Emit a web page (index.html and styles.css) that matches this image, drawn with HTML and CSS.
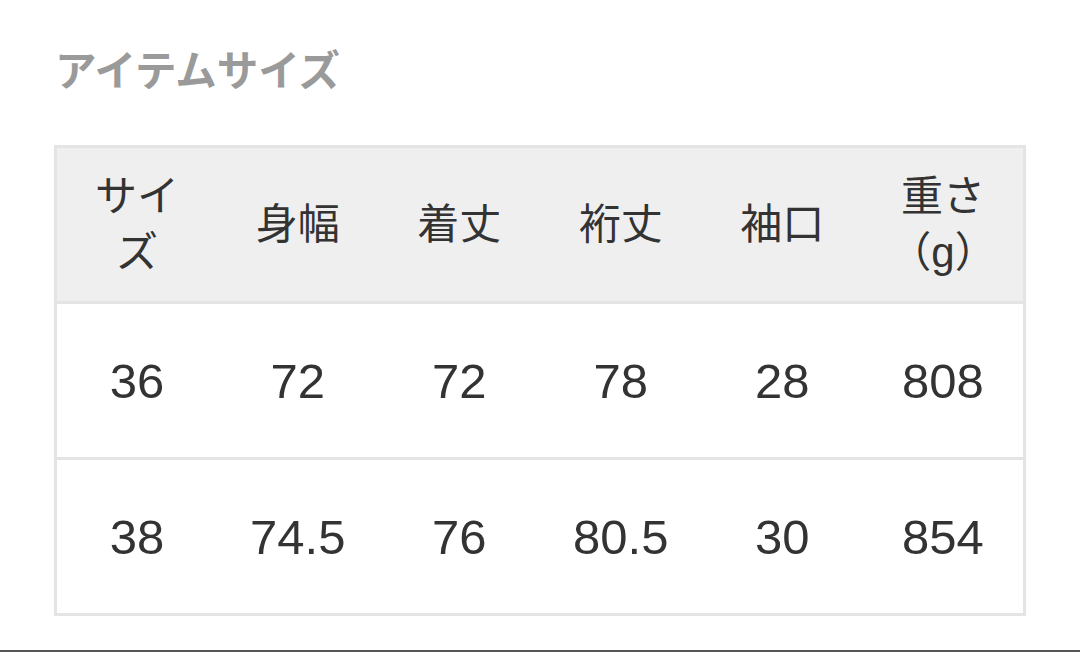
FILE: index.html
```
<!DOCTYPE html>
<html lang="ja">
<head>
<meta charset="utf-8">
<link rel="stylesheet" href="styles.css">
</head>
<body>
<div class="page">
  <h2 class="title">アイテムサイズ</h2>
  <table class="size-table">
    <thead>
      <tr>
        <th>サイズ</th>
        <th>身幅</th>
        <th>着丈</th>
        <th>裄丈</th>
        <th>袖口</th>
        <th>重さ<br>（g）</th>
      </tr>
    </thead>
    <tbody>
      <tr><td>36</td><td>72</td><td>72</td><td>78</td><td>28</td><td>808</td></tr>
      <tr><td>38</td><td>74.5</td><td>76</td><td>80.5</td><td>30</td><td>854</td></tr>
    </tbody>
  </table>
</div>
</body>
</html>
```
FILE: styles.css
```
html, body {
  margin: 0;
  padding: 0;
  background: #fff;
}
.page {
  box-sizing: border-box;
  height: 652px;
  padding: 40px 54px 0;
  border-bottom: 2px solid #555;
  font-family: "Liberation Sans", "Noto Sans CJK JP", sans-serif;
  color: #333;
}
.title {
  margin: 0 0 49px;
  font-family: "Noto Sans CJK JP", sans-serif;
  font-size: 41.5px;
  line-height: 56px;
  font-weight: 700;
  color: #9a9a9a;
  padding-left: 1px;
}
.size-table {
  width: 972px;
  border-collapse: collapse;
  table-layout: fixed;
  border: 3px solid #e4e4e4;
}
.size-table th,
.size-table td {
  text-align: center;
  vertical-align: middle;
  border-bottom: 3px solid #e4e4e4;
  padding: 0 20px;
}
.size-table th {
  background: #efefef;
  height: 156px;
  font-family: "Liberation Sans", "Noto Sans CJK JP", sans-serif;
  font-weight: 400;
  font-size: 42px;
  line-height: 56px;
  box-sizing: border-box;
}
.size-table td {
  height: 156px;
  font-size: 49px;
  box-sizing: border-box;
}
```
